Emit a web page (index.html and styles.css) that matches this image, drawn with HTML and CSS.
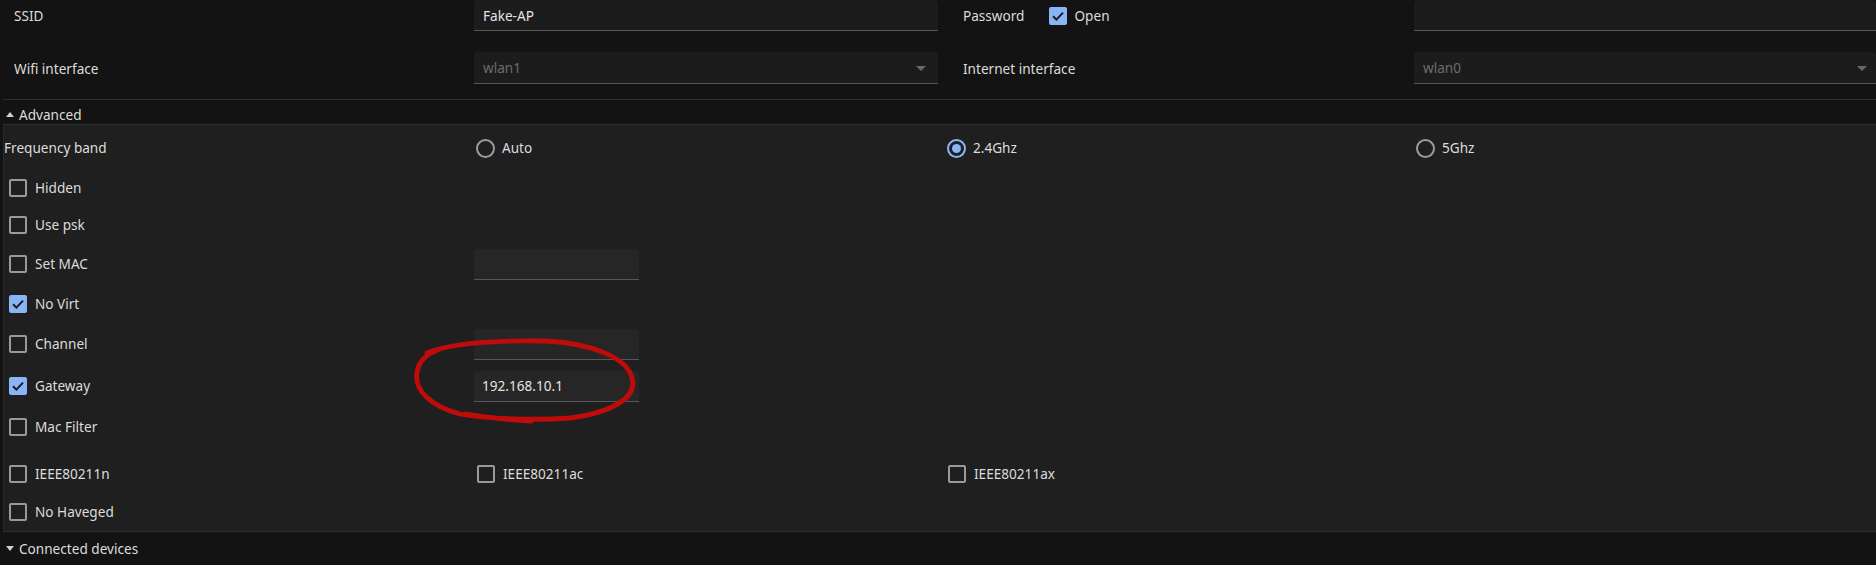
FILE: index.html
```html
<!DOCTYPE html>
<html>
<head>
<meta charset="utf-8">
<link rel="stylesheet" href="styles.css">
</head>
<body>
<div class="top">
  <div class="label">SSID</div>
  <div class="field"><span class="value">Fake-AP</span></div>
  <div class="label label-right">Password
    <span class="check checked pw-check"><svg viewBox="0 0 18 18"><path d="M4 9.2 L7.4 12.6 L14 5.6"/></svg></span>
    <span class="check-text">Open</span>
  </div>
  <div class="field"></div>
  <div class="label">Wifi interface</div>
  <div class="field select"><span class="muted">wlan1</span><span class="arrow"></span></div>
  <div class="label label-right">Internet interface</div>
  <div class="field select select-edge"><span class="muted">wlan0</span><span class="arrow"></span></div>
</div>

<div class="section-head section-open"><span class="tri tri-up"></span>Advanced</div>

<div class="panel">
  <div class="cell plain">Frequency band</div>
  <div class="cell opt"><span class="radio"></span>Auto</div>
  <div class="cell opt"><span class="radio on"></span>2.4Ghz</div>
  <div class="cell opt"><span class="radio"></span>5Ghz</div>

  <div class="cell first"><span class="check"></span>Hidden</div>
  <div class="cell span3"></div>

  <div class="cell first"><span class="check"></span>Use psk</div>
  <div class="cell span3"></div>

  <div class="cell first"><span class="check"></span>Set MAC</div>
  <div class="cell"><div class="pfield"></div></div>
  <div class="cell span2"></div>

  <div class="cell first"><span class="check checked"><svg viewBox="0 0 18 18"><path d="M4 9.2 L7.4 12.6 L14 5.6"/></svg></span>No Virt</div>
  <div class="cell span3"></div>

  <div class="cell first"><span class="check"></span>Channel</div>
  <div class="cell"><div class="pfield"></div></div>
  <div class="cell span2"></div>

  <div class="cell first"><span class="check checked"><svg viewBox="0 0 18 18"><path d="M4 9.2 L7.4 12.6 L14 5.6"/></svg></span>Gateway</div>
  <div class="cell"><div class="pfield"><span class="value">192.168.10.1</span></div></div>
  <div class="cell span2"></div>

  <div class="cell first"><span class="check"></span>Mac Filter</div>
  <div class="cell span3"></div>

  <div class="cell first"><span class="check"></span>IEEE80211n</div>
  <div class="cell opt2"><span class="check"></span>IEEE80211ac</div>
  <div class="cell opt2"><span class="check"></span>IEEE80211ax</div>
  <div class="cell"></div>

  <div class="cell first"><span class="check"></span>No Haveged</div>
  <div class="cell span3"></div>
</div>

<div class="section-head"><span class="tri tri-down"></span>Connected devices</div>

<svg class="annotation" width="1876" height="565" viewBox="0 0 1876 565">
  <path d="M427 353 C450 343, 500 340, 545 341 C590 343, 627 357, 632 378 C638 398, 610 413, 570 418 C530 421, 480 418, 460 414 C430 406, 414 390, 417 372 C419 362, 424 355, 440 349"/>
  <path d="M466 414 C490 418, 510 420, 531 421"/>
</svg>
</body>
</html>
```

FILE: styles.css
```css
html, body {
  margin: 0;
  padding: 0;
}
body {
  width: 1876px;
  height: 565px;
  overflow: hidden;
  background: #131313;
  color: #dcdcdc;
  font-family: "Noto Sans", "Open Sans", sans-serif;
  font-size: 13.6px;
  position: relative;
}

/* top form */
.top {
  display: grid;
  grid-template-columns: 474px 464px 476px 462px;
  grid-template-rows: 31px 32px;
  row-gap: 21px;
  align-items: center;
  height: 84px;
  margin-bottom: 15px;
}
.label {
  padding-left: 14px;
  display: flex;
  align-items: center;
  white-space: nowrap;
}
.label-right {
  padding-left: 25px;
}
.field {
  height: 31px;
  box-sizing: border-box;
  background: #1c1c1c;
  border-bottom: 1px solid #575757;
  border-radius: 4px 4px 0 0;
  display: flex;
  align-items: center;
  padding-left: 9px;
  position: relative;
}
.field.select {
  height: 32px;
}
.value {
  color: #e4e4e4;
}
.muted {
  color: #6c6c6c;
}
.arrow {
  position: absolute;
  right: 12px;
  top: 14px;
  width: 0;
  height: 0;
  border-left: 5px solid transparent;
  border-right: 5px solid transparent;
  border-top: 5px solid #686868;
}
.select-edge .arrow {
  right: 9px;
}

/* checkbox */
.check {
  width: 18px;
  height: 18px;
  box-sizing: border-box;
  border: 2px solid #9a9a9a;
  border-radius: 2px;
  display: inline-flex;
  flex: none;
  margin-right: 8px;
}
.check.checked {
  background: #8ab4f8;
  border-color: #8ab4f8;
}
.check svg {
  width: 18px;
  height: 18px;
  margin: -2px;
}
.check svg path {
  fill: none;
  stroke: #1b1b1b;
  stroke-width: 2;
}
.pw-check {
  margin-left: 25px;
  margin-right: 7px;
}

/* radio */
.radio {
  width: 19px;
  height: 19px;
  box-sizing: border-box;
  border: 2px solid #9c9c9c;
  border-radius: 50%;
  display: inline-flex;
  align-items: center;
  justify-content: center;
  flex: none;
  margin-right: 7px;
}
.radio.on {
  border-color: #8ab4f8;
}
.radio.on::after {
  content: "";
  width: 9px;
  height: 9px;
  border-radius: 50%;
  background: #8ab4f8;
}

/* section header */
.section-head {
  height: 32px;
  box-sizing: border-box;
  display: flex;
  align-items: center;
  padding-left: 6px;
  color: #dcdcdc;
}
.section-open {
  border-top: 1px solid #2e2e2e;
  margin-left: 3px;
  height: 25px;
  padding-left: 3px;
  padding-top: 5px;
}
.tri {
  width: 0;
  height: 0;
  border-left: 4px solid transparent;
  border-right: 4px solid transparent;
  margin-right: 5px;
}
.tri-up {
  border-bottom: 5px solid #cfcfcf;
}
.tri-down {
  border-top: 5px solid #cfcfcf;
}

/* panel */
.panel {
  margin-left: 3px;
  background: #1f1f1f;
  border-top: 1px solid #2e2e2e;
  border-bottom: 1px solid #2e2e2e;
  border-left: 1px solid #2a2a2a;
  display: grid;
  grid-template-columns: 470px 471px 469px 1fr;
  grid-template-rows: 46px 34px 40px 38px 42px 38px 46px 36px 58px 18px;
  padding-bottom: 10px;
  align-items: center;
}
.cell {
  display: flex;
  align-items: center;
  line-height: 18px;
  white-space: nowrap;
}
.plain {
  padding-left: 0;
}
.first {
  padding-left: 5px;
}
.opt {
  padding-left: 2px;
}
.opt2 {
  padding-left: 3px;
}
.span3 {
  grid-column: span 3;
}
.span2 {
  grid-column: span 2;
}
.pfield {
  width: 165px;
  height: 31px;
  box-sizing: border-box;
  background: #262626;
  border-bottom: 1px solid #575757;
  border-radius: 4px 4px 0 0;
  display: flex;
  align-items: center;
  padding-left: 8px;
}

/* hand-drawn annotation over content */
.annotation {
  position: absolute;
  left: 0;
  top: 0;
  pointer-events: none;
}
.annotation path {
  fill: none;
  stroke: #c00b0b;
  stroke-width: 4.8;
  stroke-linecap: round;
  stroke-linejoin: round;
}
```
